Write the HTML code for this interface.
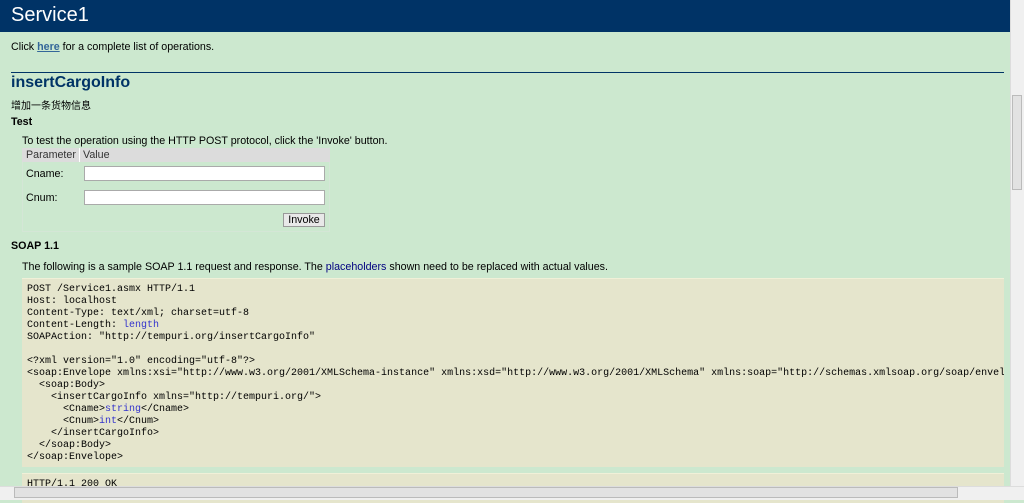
<!DOCTYPE html>
<html><head><meta charset="utf-8"><style>
body{margin:0;width:1024px;height:499px;overflow:hidden;background:#CCE8CF;font-family:"Liberation Sans","Noto Sans CJK SC",sans-serif;font-size:10.7px;color:#000;position:relative}
.a{position:absolute;white-space:nowrap}
#hd{position:absolute;left:0;top:0;width:1010px;height:32px;background:#003366;color:#fff;font-size:20px}
pre{position:absolute;margin:0;left:22px;width:982px;background:#E5E5CC;font-family:"Liberation Mono",monospace;font-size:10px;line-height:12px;padding:5px 0 0 5px;box-sizing:border-box;overflow:hidden;border-top:1px solid #f0f0d8}
.v{color:#3333cc}
input{position:absolute;border:1px solid #aaa;background:#fff;margin:0;padding:0;box-sizing:border-box}
</style></head><body>
<div id="hd"><span class="a" style="left:11px;top:4px">Service1</span></div>
<div class="a" style="left:11px;top:41px">Click <b style="color:#336699;text-decoration:underline">here</b> for a complete list of operations.</div>
<div class="a" style="left:11px;top:72px;width:993px;height:1px;background:#003366"></div>
<div class="a" style="left:11px;top:74px;font-size:16px;font-weight:bold;color:#003366">insertCargoInfo</div>
<div class="a" style="left:11px;top:97px;font-size:10px">增加一条货物信息</div>
<div class="a" style="left:11px;top:116px;font-weight:bold">Test</div>
<div class="a" style="left:22px;top:135px">To test the operation using the HTTP POST protocol, click the 'Invoke' button.</div>
<div class="a" style="left:22px;top:148px;width:308px;height:84px;border:1px solid #d4e6d6;box-sizing:border-box"></div>
<div class="a" style="left:22px;top:148px;width:308px;height:14px;background:#dcdcdc"></div>
<div class="a" style="left:79px;top:148px;width:1px;height:14px;background:#fff"></div>
<div class="a" style="left:26px;top:149px;color:#333">Parameter</div>
<div class="a" style="left:83px;top:149px;color:#333">Value</div>
<div class="a" style="left:26px;top:168px">Cname:</div>
<input style="left:84px;top:166px;width:241px;height:15px">
<div class="a" style="left:26px;top:192px">Cnum:</div>
<input style="left:84px;top:190px;width:241px;height:15px">
<div class="a" style="left:283px;top:213px;width:42px;height:14px;background:#e8e8e8;border:1px solid #999;box-sizing:border-box;text-align:center;line-height:12px">Invoke</div>
<div class="a" style="left:11px;top:240px;font-weight:bold">SOAP 1.1</div>
<div class="a" style="left:22px;top:261px">The following is a sample SOAP 1.1 request and response. The <span style="color:#000080">placeholders</span> shown need to be replaced with actual values.</div>
<pre style="top:278px;height:189px">POST /Service1.asmx HTTP/1.1
Host: localhost
Content-Type: text/xml; charset=utf-8
Content-Length: <span class="v">length</span>
SOAPAction: "http://tempuri.org/insertCargoInfo"

&lt;?xml version="1.0" encoding="utf-8"?&gt;
&lt;soap:Envelope xmlns:xsi="http://www.w3.org/2001/XMLSchema-instance" xmlns:xsd="http://www.w3.org/2001/XMLSchema" xmlns:soap="http://schemas.xmlsoap.org/soap/envelope/"&gt;
  &lt;soap:Body&gt;
    &lt;insertCargoInfo xmlns="http://tempuri.org/"&gt;
      &lt;Cname&gt;<span class="v">string</span>&lt;/Cname&gt;
      &lt;Cnum&gt;<span class="v">int</span>&lt;/Cnum&gt;
    &lt;/insertCargoInfo&gt;
  &lt;/soap:Body&gt;
&lt;/soap:Envelope&gt;</pre>
<pre style="top:473px;height:30px">HTTP/1.1 200 OK</pre>
<div class="a" style="left:1010px;top:0;width:14px;height:486px;background:#f0f0f0;border-left:1px solid #ddd"></div>
<div class="a" style="left:1012px;top:95px;width:10px;height:95px;background:#e2e2e2;border:1px solid #bbb;box-sizing:border-box"></div>
<div class="a" style="left:0;top:486px;width:1024px;height:13px;background:#f0f0f0;border-top:1px solid #ddd"></div>
<div class="a" style="left:14px;top:487px;width:944px;height:11px;background:#e2e2e2;border:1px solid #bbb;box-sizing:border-box"></div>
</body></html>
